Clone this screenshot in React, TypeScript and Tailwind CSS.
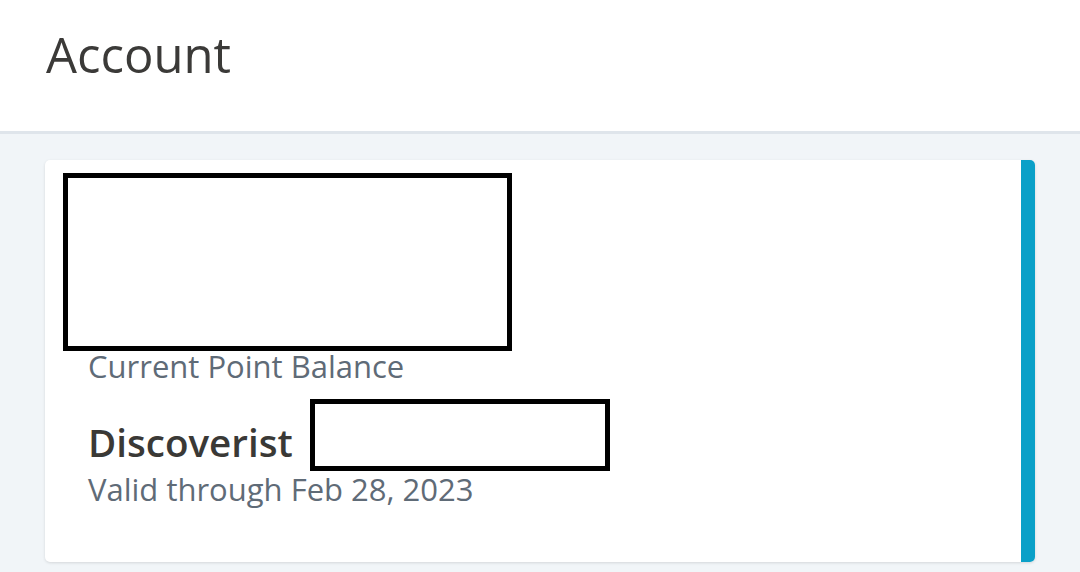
export default function App() {
  return (
    <div className="w-[1080px] h-[572px] overflow-hidden bg-[#f1f5f8] font-['Open_Sans',sans-serif]">
      <header className="h-[134px] bg-white border-b-[3px] border-[#dfe5eb] pl-[46px] pt-[22px]">
        <h1 className="text-[49px] leading-[64px] text-[#3b3a38]">Account</h1>
      </header>
      <main className="pt-[26px] pl-[45px] pr-[45px]">
        <section className="flex h-[402px] rounded-[5px] bg-white shadow-[0_1px_3px_rgba(0,0,0,0.12)] overflow-hidden">
          <div className="flex-1 pl-[18px] pt-[13px]">
            <div className="w-[449px] h-[178px] border-[5px] border-black" />
            <div className="pl-[25px]">
              <p className="text-[31px] leading-[40px] text-[#5f6b77] -mt-[5px]">Current Point Balance</p>
              <div className="flex items-start gap-[17px] mt-[32px]">
                <h2 className="text-[38.6px] leading-[48px] font-semibold text-[#3a3936]">Discoverist</h2>
                <div className="w-[300px] h-[72px] border-[5px] border-black -mt-[19px]" />
              </div>
              <p className="text-[31px] leading-[40px] text-[#5f6b77] -mt-[2px]">Valid through Feb 28, 2023</p>
            </div>
          </div>
          <div className="w-[14px] bg-[#0aa0c8]" />
        </section>
      </main>
    </div>
  )
}
